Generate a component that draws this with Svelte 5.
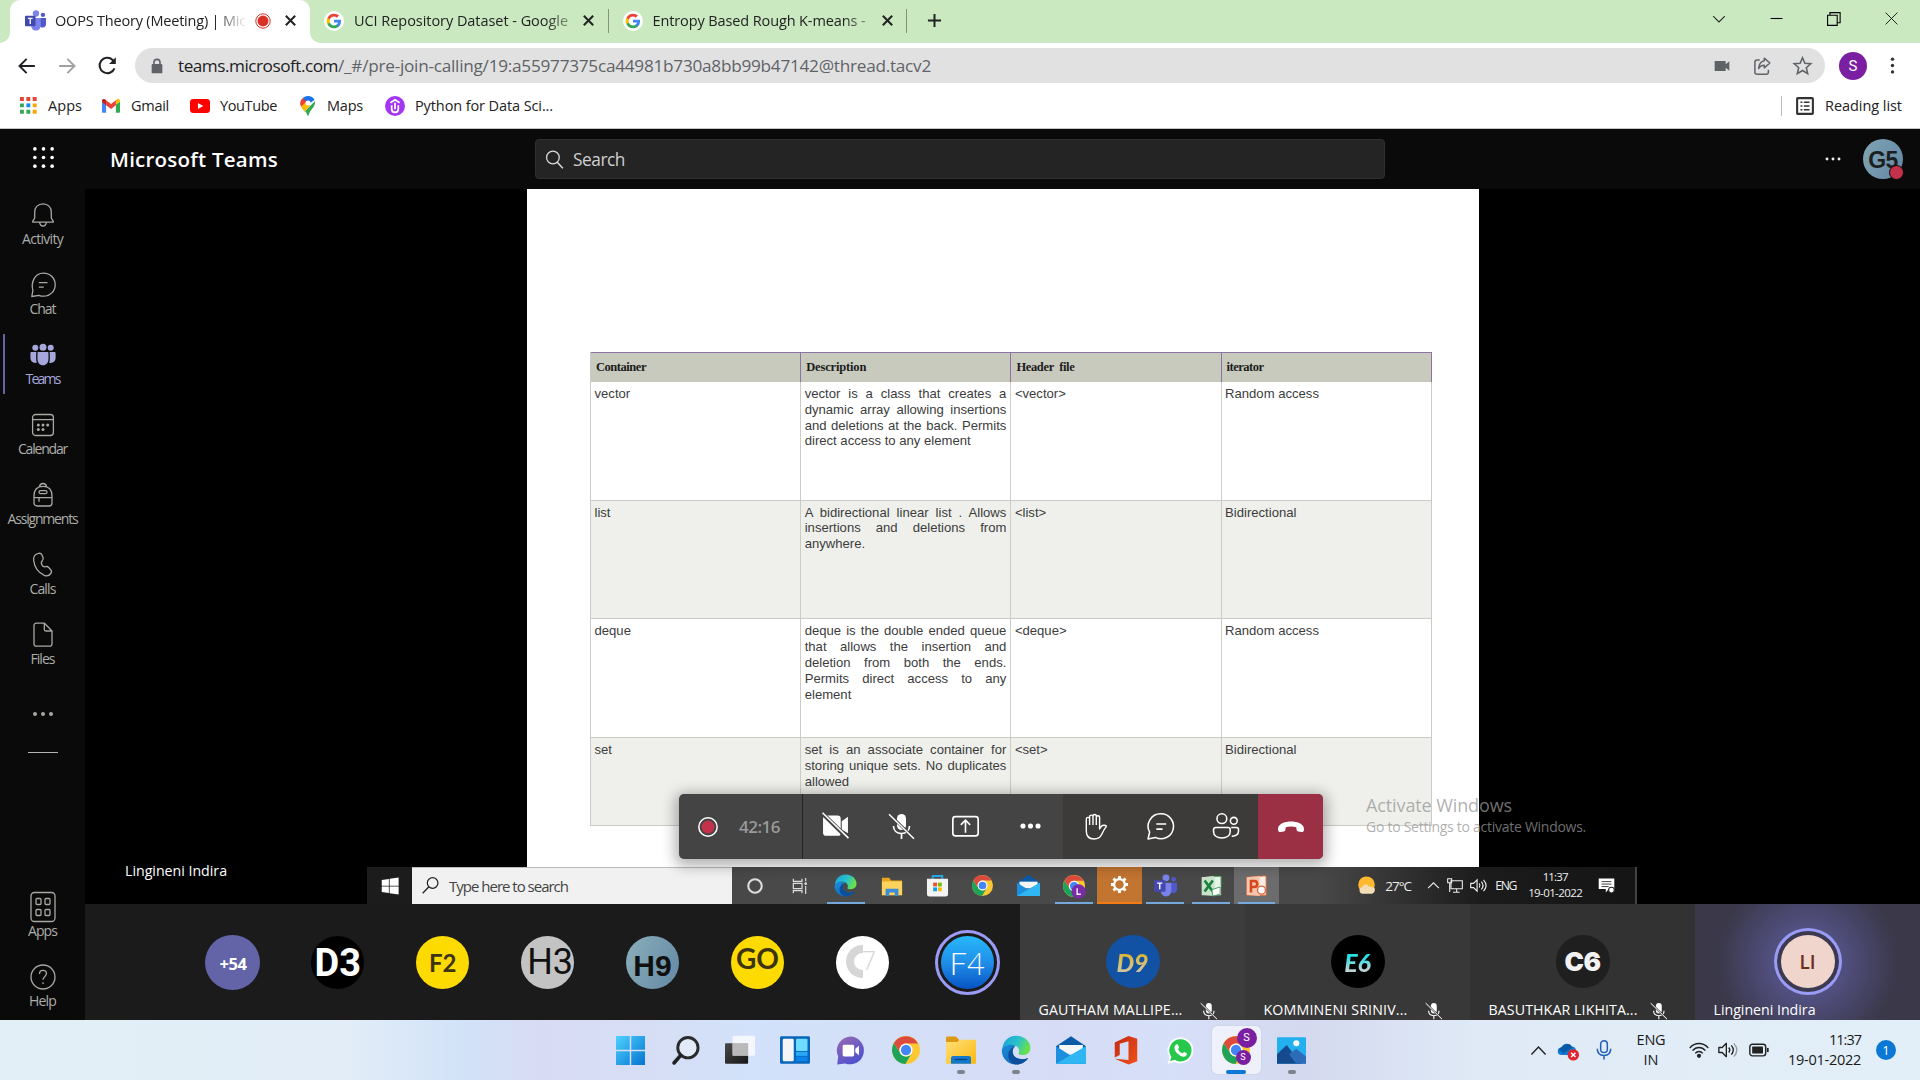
<script>
  // Spreads letter spacing so that a label takes exactly the given width.
  function fit(node, width) {
    const apply = (w) => {
      if (!w) return;
      node.style.letterSpacing = '0px';
      const natural = node.getBoundingClientRect().width;
      node.style.letterSpacing = (w - natural) / node.textContent.length + 'px';
    };
    apply(width);
    return { update: apply };
  }

  const chromeArt =
    '<circle cx="12" cy="12" r="12" fill="#fcc934"/><path d="M1.6 6A12 12 0 0 0 11.5 24L16.8 14.8A5.5 5.5 0 0 1 7.2 14.8z" fill="#1ea35a"/><path d="M1.6 6A12 12 0 0 1 22.4 6.4H12a5.6 5.6 0 0 0-5.1 7.8z" fill="#dc4b3e"/><circle cx="12" cy="12" r="5.6" fill="#fff"/><circle cx="12" cy="12" r="4.4" fill="#4285f4"/>';
  const edgeArt =
    '<path d="M1 12C1 5 6 .5 12 .5c7 0 11.500 4.600 11.500 9.800 0 3.600-2.800 5.700-6 5.700-2.800 0-3.900-.9-3.300-2 1.300-2.500-1.200-6-5.500-6C4.500 8 1.800 9.500 1 12z" fill="url(#edgeTop)"/><path d="M.6 12.500C.8 18.800 5.700 23.500 12 23.500c4.300 0 7.700-2.100 9.700-5.200-4.800 2.300-12.400.9-12.400-5.300 0-2.400 1.500-3.900 2.500-4.500C7 6.800 1 8.500.6 12.500z" fill="url(#edgeLow)"/><path d="M9.300 13c0 6.200 7.600 7.600 12.400 5.300-2 3.100-5.400 5.200-9.700 5.200-3.500-.6-6.200-3.500-6.200-7.200 0-3.300 1.900-6 6-7.800-1 .6-2.500 2.100-2.500 4.500z" fill="#0c4f9c"/>';
  const mailArt =
    '<path d="M0 9 12 1l12 8v4H0z" fill="#0a5aa8"/><path d="M2.500 8h19v7h-19z" fill="#f4f6f8"/><path d="M24 9v14H0z" fill="#30b6f3"/><path d="M0 9v14h24L12 16.500z" fill="#1c90de"/><path d="M0 23l12-7L24 9v14z" fill="#30b6f3"/>';
  const folderArt =
    '<path d="M0 2.500c0-.8.500-1.300 1.300-1.300h6.500l2.500 2.300V9H0z" fill="#dd9a10"/><path d="M0 5.500h9l2-1.700h13V23H0z" fill="url(#folder)"/><path d="M4 23v-4.500c0-1 .7-1.700 1.700-1.700h12.600c1 0 1.700.7 1.700 1.700V23z" fill="#1379cc"/><path d="M7 19.600h10" stroke="#0a3f7d" stroke-width="1"/>';
  const teamsArt =
    '<circle cx="12.500" cy="4" r="3.600" fill="#7b83eb"/><circle cx="20.500" cy="5.500" r="2.500" fill="#5059c9"/><path d="M17 9h7v7c0 2.500-1.500 4-3.700 4-1.500 0-2.700-.6-3.300-1.800z" fill="#5059c9"/><path d="M7 9h11v8c0 4-2.200 6.500-5.500 6.500S7 21 7 17z" fill="#7b83eb"/><rect y="6.500" width="12" height="12" rx="1" fill="#4349b0"/><path d="M3.300 9.500h5.400M6 9.500v6.500" stroke="#fff" stroke-width="1.500"/>';

  const art = {
    teamsLogo: teamsArt,
    google:
      '<circle cx="12" cy="12" r="12" fill="#fff"/><g transform="translate(2.400 2.400) scale(.8)"><path fill="#4285f4" d="M22.560 12.250c0-.78-.07-1.530-.2-2.250H12v4.260h5.920c-.26 1.370-1.040 2.530-2.210 3.310v2.770h3.570c2.080-1.920 3.280-4.740 3.280-8.090z"/><path fill="#34a853" d="M12 23c2.970 0 5.460-.98 7.280-2.660l-3.570-2.770c-.98.66-2.230 1.060-3.710 1.060-2.860 0-5.290-1.930-6.160-4.530H2.180v2.840C3.990 20.530 7.700 23 12 23z"/><path fill="#fbbc05" d="M5.840 14.090c-.22-.66-.35-1.360-.35-2.090s.13-1.430.35-2.090V7.070H2.180C1.430 8.550 1 10.220 1 12s.43 3.450 1.180 4.930z"/><path fill="#ea4335" d="M12 5.380c1.620 0 3.060.56 4.210 1.640l3.150-3.150C17.450 2.090 14.970 1 12 1 7.700 1 3.990 3.470 2.180 7.070l3.660 2.840c.87-2.600 3.300-4.530 6.160-4.530z"/></g>',
    rec: '<circle cx="12" cy="12" r="10.800" fill="#fff" stroke="#d93025" stroke-width="1.500"/><circle cx="12" cy="12" r="8.200" fill="#d93025"/>',
    x: '<path d="M4.500 4.500l15 15M19.500 4.500l-15 15" stroke="#222" stroke-width="3.200"/>',
    plus: '<path d="M12 1.500v21M1.500 12h21" stroke="#222" stroke-width="3.200"/>',
    chevDown: '<path d="M2 7l10 10L22 7" fill="none" stroke="#222" stroke-width="1.800"/>',
    minus: '<path d="M1 12h22" stroke="#000" stroke-width="2"/>',
    restore: '<path d="M1 5.500h16.500V23H1zM5 5V1h17.500v17.500H18" fill="none" stroke="#000" stroke-width="1.900"/>',
    close: '<path d="M1 1l22 22M23 1L1 23" stroke="#111" stroke-width="1.700"/>',
    back: '<path d="M22.500 12H2.500M11.500 2.500L2 12l9.500 9.500" fill="none" stroke="#202124" stroke-width="2.600"/>',
    forward: '<path d="M1.500 12h20M12.500 2.500L22 12l-9.500 9.500" fill="none" stroke="#a0a1a3" stroke-width="2.600"/>',
    reload: '<path d="M20.800 15.500A9.700 9.700 0 1 1 18.500 5l2.500 2.500" fill="none" stroke="#202124" stroke-width="2.600"/><path d="M22.500 1.500v8.500H14z" fill="#202124"/>',
    lock: '<rect x="4" y="9" width="16" height="14" rx="1.800" fill="#5f6368"/><path d="M7.500 10V6.500a4.500 4.500 0 0 1 9 0V10" fill="none" stroke="#5f6368" stroke-width="2.400"/>',
    cam: '<path d="M1 4.500h16.500v5l5.500-4.500v14l-5.500-4.500v5H1z" fill="#5f6368"/>',
    share: '<path d="M9 4H5.500A3 3 0 0 0 2.500 7v13a3 3 0 0 0 3 3h12a3 3 0 0 0 3-3v-3" fill="none" stroke="#5f6368" stroke-width="2"/><path d="M15 1.500l7.500 6.500-7.500 6.500V11c-4 0-6 1.500-7.500 4.500.3-5 2.500-9.500 7.500-10.500z" fill="none" stroke="#5f6368" stroke-width="1.900" stroke-linejoin="round"/>',
    star: '<path d="M12 2.200l3 7 7.500.6-5.700 5 1.700 7.400L12 18.300l-6.500 3.900 1.700-7.400-5.700-5L9 9.200z" fill="none" stroke="#5f6368" stroke-width="2"/>',
    vdots: '<g fill="#333"><circle cx="12" cy="3" r="2.400"/><circle cx="12" cy="12" r="2.400"/><circle cx="12" cy="21" r="2.400"/></g>',
    appsGrid:
      '<path fill="#ea4335" d="M0 0h5.500v5.500H0zM9 0h5.500v5.500H9zM18 0h5.500v5.500H18z"/><path fill="#34a853" d="M0 9h5.500v5.500H0zM0 18h5.500v5.500H0zM9 18h5.500v5.500H9z"/><path fill="#1a8cf0" d="M9 9h5.500v5.500H9z"/><path fill="#fba500" d="M18 9h5.500v5.500H18zM18 18h5.500v5.500H18z"/>',
    gmail:
      '<path d="M0 6v13.500c0 1 .7 1.500 1.500 1.500h4V10z" fill="#4285f4"/><path d="M24 6v13.500c0 1-.7 1.500-1.500 1.500h-4V10z" fill="#34a853"/><path d="M18.500 10L24 6V5c0-2.500-2.500-3-4-1.900l-1.500 1.200z" fill="#fbbc04"/><path d="M5.500 4.300V11l6.500 5 6.500-5V4.300L12 9.200z" fill="#ea4335"/><path d="M0 5v1.500L5.500 11V4.300L4 3.100C2.500 2 0 2.500 0 5z" fill="#c5221f"/>',
    youtube: '<rect y="3.500" width="24" height="17" rx="4" fill="#f00"/><path d="M9.500 8.300v7.400l6.500-3.700z" fill="#fff"/>',
    maps:
      '<path d="M12 0c3.500 0 6.500 1.800 7.900 4.700L8.500 12 5.800 2.300A9 9 0 0 1 12 0z" fill="#1a73e8"/><path d="M3.600 12.600C5 15 6.700 16.700 8 18.500L20.500 5.900C21 9.500 19 13 16.500 15.800 14 18.600 13.300 21 12.700 23c-.3 1-1.200 1-1.500 0-.7-2.300-2-4-3.200-5.500z" fill="#34a853"/><path d="M3.600 12.600C5 15 6.700 16.700 8 18.500l6.500-7L9.500 6z" fill="#fbbc04"/><path d="M5.800 2.300L10 7 3.700 12.600C1.800 9.500 2.300 5 5.800 2.300z" fill="#ea4335"/><circle cx="12" cy="8.500" r="3" fill="#fff"/>',
    udemy: '<circle cx="12" cy="12" r="12" fill="#a435f0"/><path d="M6.500 8L12 4.500 17.500 8M8 11v4.500c0 2.500 1.500 4 4 4s4-1.500 4-4V11M12 8v8" fill="none" stroke="#fff" stroke-width="2.100"/>',
    reading: '<rect x="1.500" y="1.500" width="21" height="21" rx="1" fill="none" stroke="#333" stroke-width="2.800"/><path d="M6 7h2.500M6 12h2.500M6 17h2.500M10.500 7H18M10.500 12H18M10.500 17H18" stroke="#333" stroke-width="2.200"/>',
    waffle: '<g fill="#fff"><circle cx="3" cy="3" r="1.900"/><circle cx="12" cy="3" r="1.900"/><circle cx="21" cy="3" r="1.900"/><circle cx="3" cy="12" r="1.900"/><circle cx="12" cy="12" r="1.900"/><circle cx="21" cy="12" r="1.900"/><circle cx="3" cy="21" r="1.900"/><circle cx="12" cy="21" r="1.900"/><circle cx="21" cy="21" r="1.900"/></g>',
    search: '<circle cx="10" cy="9.500" r="8" fill="none" stroke="#ddd" stroke-width="1.600"/><path d="M15.500 15.500l7 7.500" stroke="#ddd" stroke-width="1.800"/>',
    hdots: '<g fill="#eee"><circle cx="3" cy="12" r="2.200"/><circle cx="12" cy="12" r="2.200"/><circle cx="21" cy="12" r="2.200"/></g>',

    // call bar
    recording: '<circle cx="12" cy="12" r="11" fill="none" stroke="#fff" stroke-width="1.800"/><circle cx="12" cy="12" r="7.800" fill="#c4314b"/>',
    camOff: '<path d="M4 2.500h11a3 3 0 0 1 3 3V20c0 1-1 2-2 2H4a3 3 0 0 1-3-3V5.500a3 3 0 0 1 3-3z" fill="#fff"/><path d="M19 8l6-4.500v16L19 16z" fill="#fff"/><path d="M0 0l25 24.500" stroke="#444" stroke-width="4"/><path d="M.5-.3L25.500 24.200" stroke="#fff" stroke-width="1.500"/>',
    micOff: '<rect x="9" y="0" width="9" height="16" rx="4.500" fill="#fff"/><path d="M5.500 12c0 4.600 3.300 7.500 8 7.500s8-2.900 8-7.500M13.500 19.500V25" fill="none" stroke="#fff" stroke-width="1.700"/><path d="M1.500.5l25 24.500" stroke="#444" stroke-width="3"/><path d="M1 .2l25 24.500" stroke="#fff" stroke-width="1.500"/>',
    present: '<rect x=".8" y="3.500" width="24.400" height="18.500" rx="2.500" fill="none" stroke="#fff" stroke-width="1.600"/><path d="M13 19V7.500M8.500 11.500L13 7l4.500 4.500" fill="none" stroke="#fff" stroke-width="1.600"/>',
    more: '<g fill="#fff"><circle cx="4.500" cy="12.500" r="2.900"/><circle cx="13" cy="12.500" r="2.900"/><circle cx="21.500" cy="12.500" r="2.900"/></g>',
    hand: '<path d="M3.300 13V5c0-2.200 3.300-2.200 3.300 0v6M6.600 11V2.800c0-2.200 3.400-2.200 3.400 0V11M10 11V2c0-2.100 3.300-2.100 3.300 0v9M13.300 11V3.300c0-2.100 3.300-2.100 3.300 0V15c1.200-2.800 3.200-4.500 6-3.500.8.300.9.900.3 1.600-2 2.300-3 5-4.400 7.700-1.400 2.900-3.300 4.200-7.300 4.200-5.300 0-7.900-3.300-7.900-8V12" fill="none" stroke="#fff" stroke-width="1.400" stroke-linejoin="round"/>',
    chatBar: '<path d="M13.300.8a12 12 0 1 1-5.200 22.700L1 25l1.500-6.500A12 12 0 0 1 13.300.8z" fill="none" stroke="#fff" stroke-width="1.500" stroke-linejoin="round"/><path d="M9 10.500h9.500M9 15.500h6" stroke="#fff" stroke-width="1.500"/>',
    people: '<g fill="none" stroke="#fff" stroke-width="1.500"><circle cx="9.500" cy="5.500" r="4.700"/><circle cx="21" cy="7.500" r="3.300"/><path d="M3.500 14h12c1.200 0 2 .8 2 2v2c0 3.500-3.200 6-8 6s-8-2.500-8-6v-2c0-1.200.8-2 2-2zM18.500 14h5c1.200 0 2 .8 2 2v1.500c0 3-2.500 5-6.500 4.800"/></g>',
    hangup: '<path d="M13 7.500c6 0 11.500 2 12.800 6 .8 2.600-.2 5-2.300 4.600l-3.200-.7c-1.100-.2-1.700-1-1.800-2.200l-.2-2c-3.300-1-7.300-1-10.600 0l-.2 2c-.1 1.200-.7 2-1.800 2.200l-3.200.7C.4 18.500-.6 16.100.2 13.500 1.500 9.500 7 7.500 13 7.500z" fill="#fff"/>',

    // rail
    bell: '<path d="M13 1.800c-5 0-8.300 3.500-8.300 8.400v5.800l-2 3.400c-.2.400 0 .8.500.8h19.600c.5 0 .7-.4.500-.8l-2-3.400v-5.800c0-4.900-3.300-8.400-8.300-8.400zM9.600 20.300c.4 2.200 1.700 3.700 3.400 3.700s3-1.500 3.400-3.700"/>',
    chat: '<path d="M13.500 1.200c6.700 0 11.700 5 11.700 11.500S20.200 24.200 13.500 24.200c-1.700 0-3-.2-4.500-.9L1.800 24.500l1.100-6.200C1 12 3.500 1.200 13.500 1.200z"/><path d="M8.800 10.700H17.500M8.800 15.200h5"/>',
    teams: '<g fill="#a6a7dc" stroke="none"><circle cx="5.300" cy="5.700" r="3"/><circle cx="13" cy="5.200" r="3.500"/><circle cx="20.700" cy="5.700" r="3"/><path d="M7.500 11.200c0-.8.500-1.200 1.200-1.200h8.600c.7 0 1.200.4 1.200 1.200V17c0 3.700-2.200 6.300-5.500 6.300s-5.500-2.600-5.500-6.300zM.4 11.200c0-.8.500-1.200 1.200-1.200h5c-.4.700-.4 1.500-.4 2v5c0 1.400.2 2.600.7 3.800C3 21.500.4 19.500.4 16zM25.600 11.200c0-.8-.5-1.200-1.200-1.200h-5c.4.700.4 1.500.4 2v5c0 1.400-.2 2.600-.7 3.800 3.900.7 6.500-1.300 6.500-4.800z"/></g>',
    calendar: '<rect x="2.600" y="2.500" width="20.800" height="21" rx="3"/><path d="M2.600 7.600h20.800"/><g fill="#a8a8a4" stroke="none"><circle cx="8.300" cy="13" r="1.500"/><circle cx="13" cy="13" r="1.500"/><circle cx="17.700" cy="13" r="1.500"/><circle cx="8.300" cy="17.500" r="1.500"/><circle cx="13" cy="17.500" r="1.500"/></g>',
    backpack: '<path d="M4 14c0-6.200 3-9.700 9-9.700s9 3.500 9 9.700v7a3 3 0 0 1-3 3H7a3 3 0 0 1-3-3zM9.500 4.700c.3-2 1.500-3.200 3.500-3.200s3.200 1.200 3.500 3.200M4 15.700h18M9 15.700v4"/><rect x="9" y="8.700" width="8" height="3" rx="1.500"/>',
    phone: '<path d="M8 1.500c1.700-.5 3.300 0 4 1.500l1 2.500c.5 1.200.2 2.300-.7 3.200-1.300 1.200-1.300 2.500-.4 4.200.9 1.600 1.900 2.200 3.500 1.800 1.400-.4 2.400-.2 3.300.8l2 2.300c1 1.200 1.100 2.500.1 3.700-1.500 2.100-3.800 2.900-6.500 1.800C8.500 20.700 4.500 15.200 3.700 8.500 3.200 5 4.700 2.500 8 1.500z"/>',
    file: '<path d="M7 1.200h7.500L22 9v12.800a2.200 2.200 0 0 1-2.200 2.400H6.200A2.200 2.200 0 0 1 4 21.800V3.500a2.200 2.200 0 0 1 2.200-2.300zM14.300 1.500v6A1.500 1.500 0 0 0 15.800 9H22"/>',
    apps: '<rect x="1" y="-1.500" width="24" height="29" rx="3.500"/><rect x="6" y="4.500" width="5" height="6" rx="1"/><rect x="15" y="4.500" width="5" height="6" rx="1"/><rect x="6" y="15.500" width="5" height="6" rx="1"/><rect x="15" y="15.500" width="5" height="6" rx="1"/>',
    help: '<circle cx="13" cy="13" r="12"/><path d="M9.500 10c0-2.300 1.500-3.700 3.500-3.700s3.500 1.300 3.500 3.300c0 2.700-3.500 3-3.500 6.100M13 18.200v1.800"/>',

    // taskbars
    win10: '<g fill="#fff"><path d="M1 4l9.500-1.400v8.900H1zM11.500 2.400L23.500.7v10.800h-12zM1 12.500h9.500v8.900L1 20zM11.500 12.500h12v10.800l-12-1.700z"/></g>',
    search10: '<circle cx="15" cy="8.500" r="7.500" fill="none" stroke="#222" stroke-width="1.700"/><path d="M9.700 13.800L1 23" stroke="#222" stroke-width="1.800"/>',
    cortana: '<circle cx="12" cy="12" r="9" fill="none" stroke="#ddd" stroke-width="2.800"/>',
    tasks10: '<path d="M2 1v4h13V1M2 23v-4h13v4M2 8h13v8H2zM20.500 0v5M20.500 12v12" fill="none" stroke="#ddd" stroke-width="1.800"/><circle cx="20.500" cy="8.500" r="2" fill="#ddd"/>',
    edge: edgeArt,
    chrome: chromeArt,
    mail: mailArt,
    folder: folderArt,
    folder10: '<path d="M1 3h8l2 3h12v16H1z" fill="#e9a820"/><path d="M1 7h22v15H1z" fill="#fcd35c"/><path d="M5 23v-8h14v8h-4v-4H9v4z" fill="#3a8ddb"/>',
    store: '<path d="M7 5V2h10v3" fill="none" stroke="#28a8ea" stroke-width="2"/><path d="M1 5h22v16a2.500 2.500 0 0 1-2.500 2.500h-17A2.500 2.500 0 0 1 1 21z" fill="#f3f3f3"/><path d="M7.500 9h4v4h-4z" fill="#f25022"/><path d="M12.500 9h4v4h-4z" fill="#7fba00"/><path d="M7.500 14h4v4h-4z" fill="#00a4ef"/><path d="M12.500 14h4v4h-4z" fill="#ffb900"/>',
    chromeL: chromeArt + '<circle cx="17" cy="18" r="7.800" fill="#7b2aa8"/><path d="M15.400 14.500v6.500h4" fill="none" stroke="#fff" stroke-width="1.400"/>',
    gear: '<circle cx="12" cy="12" r="6.800" fill="none" stroke="#fff" stroke-width="2.800"/><path d="M12 1.200v4M12 18.800v4M1.200 12h4M18.800 12h4M4.400 4.400l2.800 2.800M16.800 16.800l2.800 2.800M4.400 19.600l2.800-2.800M16.800 7.200l2.800-2.800" stroke="#fff" stroke-width="3.600"/>',
    excel: '<path d="M2 2.500L20 1h3v21H2z" fill="#e8f3e8"/><path d="M2 2.500L16 1v22L2 21.500z" fill="#c9e4c9"/><path d="M5 6l9 12M14 6L5 18" stroke="#1c8040" stroke-width="3"/><path d="M13 16l9-3v8l-8 2z" fill="#fff" stroke="#3b9b57"/><path d="M15 1.500h8V12" fill="none" stroke="#3b9b57"/>',
    ppt: '<path d="M2 2.500L20 1h3v21H2z" fill="#fdeee6" stroke="#e0683c"/><path d="M2 2.500L16 1v22L2 21.500z" fill="#f6c7ae"/><path d="M6.500 19V6.500H10c4.500 0 4.500 6.500 0 6.500H7" fill="none" stroke="#d3491f" stroke-width="2.800"/><circle cx="18" cy="16.500" r="4.300" fill="#fff" stroke="#e0683c" stroke-width="1.500"/>',
    weather: '<circle cx="12" cy="11" r="10.500" fill="#ffb92e"/><path d="M7 22.500a4.300 4.300 0 0 1-.3-8.500c.8-4 6.700-4.300 8-.8 3-.3 5.500.8 7.500 2.300 1.300 3.700-1 7-4.200 7z" fill="#f3ddb5"/>',
    up10: '<path d="M2 17L12 7l10 10" fill="none" stroke="#eee" stroke-width="2"/>',
    net10: '<path d="M6 4h17v12H6zM14.500 16v5M9 21.500h10M1 1h6v6H1zM4 7v14" fill="none" stroke="#eee" stroke-width="1.600"/>',
    vol10: '<path d="M1 9h4l5-5v16l-5-5H1z" fill="none" stroke="#eee" stroke-width="1.600"/><path d="M13 9c1.500 2 1.500 4 0 6M16 6.500c3 3.500 3 7.500 0 11M19 4c4.500 5 4.500 11 0 16" fill="none" stroke="#eee" stroke-width="1.600"/>',
    notif10: '<path d="M1 2h22v15h-8l-4 5v-5H1z" fill="#fff"/><path d="M5 6.500h14M5 10h14M5 13.500h10" stroke="#333" stroke-width="1.300"/><circle cx="19" cy="18.500" r="4" fill="#fff" stroke="#222" stroke-width="1.500"/>',
    win11: '<path d="M0 0h11.400v11.400H0zM12.600 0H24v11.400H12.600zM0 12.600h11.400V24H0zM12.600 12.600H24V24H12.600z" fill="url(#win)"/>',
    search11: '<circle cx="14" cy="9.700" r="8.400" fill="#fff" fill-opacity=".35" stroke="#2b2b2b" stroke-width="2.400"/><path d="M8 16L2.500 22.300" stroke="#222" stroke-width="3" stroke-linecap="round"/>',
    tasks11: '<rect y="6.500" width="18.500" height="16.500" rx=".8" fill="url(#dark)"/><rect x="6" y=".5" width="18" height="16" rx=".8" fill="#fff" fill-opacity=".75"/><rect x="6" y="6.500" width="12.500" height="10" fill="#b5b5b5" fill-opacity=".8"/>',
    widgets: '<rect y="1" width="24" height="22" rx="1" fill="#0a66bd"/><rect x="2.200" y="3" width="8.800" height="18" rx="1" fill="#f5f5f5"/><rect x="12.800" y="3" width="9.200" height="9.700" rx=".7" fill="#6fdcff"/><path d="M12.800 13.500H22v3.200h-9.200z" fill="#2aa9f5"/><path d="M12.800 17.300H22V21h-9.200z" fill="#0a84e8"/>',
    meet: '<path d="M12.500.5a11.500 11.500 0 1 1-5 22.200L1 23.500l.8-6.500A11.500 11.500 0 0 1 12.500.5z" fill="url(#meet)"/><rect x="5.500" y="7.200" width="9.500" height="9.800" rx="1.200" fill="#fff"/><path d="M16 10.500l3-2.500v8l-3-2.500z" fill="#fff"/>',
    office: '<path d="M3 6L14 .7 21 3v18l-7 2.500L3 19l11 1V5L7 7v9l-4 2z" fill="url(#office)"/>',
    whatsapp: '<path d="M12.200.3a11.600 11.600 0 1 1-5.700 21.900L.5 23.700l1.600-5.900A11.600 11.600 0 0 1 12.200.3z" fill="#fff"/><path d="M12.200 2a9.900 9.900 0 1 1-5.500 18.300l-3.900 1.200 1.100-3.900A9.900 9.900 0 0 1 12.200 2z" fill="#25c84a"/><path d="M8.500 6.500c.8-.3 1.200 0 1.500.8l.7 1.800c.1.700-1 1.500-.9 1.800.8 1.700 2 2.800 3.800 3.600.4.100 1.200-1.300 1.700-1.200l2.200 1.100c.5.400-.1 2.100-1 2.700-2.200 1.200-5.200-.3-7.500-2.600C6.500 12 5.500 8 8.500 6.500z" fill="#fff"/>',
    photos: '<rect y="1" width="24" height="22" rx=".8" fill="#23b0ef"/><path d="M0 15l8-7.500L20 23H0z" fill="#154a8e"/><path d="M10 15l6-4.500L24 17v6H16z" fill="#2c6cb8"/><circle cx="16" cy="6" r="2.500" fill="#fff"/>',
    up11: '<path d="M2 17.500L12 7l10 10.500" fill="none" stroke="#222" stroke-width="2"/>',
    onedrive: '<path d="M4 17a4.200 4.200 0 0 1 0-8.500C5.500 3.500 13 2.500 15.500 7.500c3.500 0 5 2 5 4.700 0 2.500-1 4.800-4 4.800z" fill="#0f7ad3"/><path d="M9.500 5c3-1 6 .5 7 4L6 15 1.500 11c.3-1.500 1.200-2.500 2.500-2.600C5 6.500 7 5.300 9.500 5z" fill="#0a5aa8"/><circle cx="17.500" cy="17" r="6.500" fill="#e0242f"/><path d="M15 14.500l5 5M20 14.500l-5 5" stroke="#fff" stroke-width="1.600"/>',
    mic: '<rect x="8" y="1" width="8" height="14" rx="4" fill="none" stroke="#1f5fb8" stroke-width="1.800"/><path d="M4 10.500c0 5 3 8 8 8s8-3 8-8M12 18.500V23.500" fill="none" stroke="#1f5fb8" stroke-width="1.800"/>',
    wifi: '<g fill="none" stroke="#222" stroke-width="1.700"><path d="M1 9.500C7 2.500 17 2.500 23 9.500M4.300 12.800c4.200-5 11.200-5 15.400 0M7.500 16c2.500-3 6.500-3 9 0"/></g><circle cx="12" cy="19" r="2.500" fill="#222"/>',
    vol: '<path d="M1 9h4l5-5v16l-5-5H1z" fill="none" stroke="#222" stroke-width="1.600" stroke-linejoin="round"/><path d="M13 9c1.500 2 1.500 4 0 6M16 6.500c3 3.500 3 7.500 0 11" fill="none" stroke="#222" stroke-width="1.600"/><path d="M19 4c4.500 5 4.500 11 0 16" fill="none" stroke="#999" stroke-width="1.600"/>',
    battery: '<rect x="1" y="5" width="19" height="14" rx="3" fill="none" stroke="#222" stroke-width="1.700"/><rect x="3.800" y="7.800" width="13" height="8.400" rx="1" fill="#222"/><path d="M22.500 9.500v5" stroke="#222" stroke-width="2.200"/>'
  };

  const tabs = [
    { icon: 'teamsLogo', text: 'OOPS Theory (Meeting) | Mic', w: 191, active: true },
    { icon: 'google', text: 'UCI Repository Dataset - Google', w: 214 },
    { icon: 'google', text: 'Entropy Based Rough K-means -', w: 213 }
  ];
  const marks = [
    { icon: 'appsGrid', size: 17, lead: 28, text: 'Apps', w: 34, box: 82 },
    { icon: 'gmail', size: 18, lead: 29, text: 'Gmail', w: 38, box: 88 },
    { icon: 'youtube', size: 20, lead: 30, text: 'YouTube', w: 57, box: 108 },
    { icon: 'maps', size: 20, lead: 29, text: 'Maps', w: 36, box: 87 },
    { icon: 'udemy', size: 20, lead: 30, text: 'Python for Data Sci...', w: 138, box: 180 }
  ];
  const rail = [
    ['bell', 'Activity', 41],
    ['chat', 'Chat', 26],
    ['teams', 'Teams', 34],
    ['calendar', 'Calendar', 49],
    ['backpack', 'Assignments', 70],
    ['phone', 'Calls', 26],
    ['file', 'Files', 24]
  ];
  const rows = [
    ['vector', 'vector is a class that creates a dynamic array allowing insertions and deletions at the back. Permits direct access to any element', '<vector>', 'Random access'],
    ['list', 'A bidirectional linear list . Allows insertions and deletions from anywhere.', '<list>', 'Bidirectional'],
    ['deque', 'deque is the double ended queue that allows the insertion and deletion from both the ends. Permits direct access to any element', '<deque>', 'Random access'],
    ['set', 'set is an associate container for storing unique sets. No duplicates allowed', '<set>', 'Bidirectional']
  ];
  const heads = [['Container', 50], ['Description', 60], ['Header  file', 58], ['iterator', 37]];
  const sharedApps = [
    ['cortana', 18, ''], ['tasks10', 16, ''], ['edge', 23, 'run'], ['folder10', 22, ''], ['store', 23, ''],
    ['chrome', 21, ''], ['mail', 23, ''], ['chromeL', 22, 'run'], ['gear', 19, 'alert'], ['teamsLogo', 23, 'run'],
    ['excel', 22, 'run'], ['ppt', 22, 'run open']
  ];
  const bubbles = [
    ['+54', 'more'], ['D3', 'd3'], ['F2', 'f2'], ['H3', 'h3'], ['H9', 'h9'], ['GO', 'go'], ['7', 'c7'], ['F4', 'f4']
  ];
  const tiles = [
    { id: 'D9', cls: 'd9', name: 'GAUTHAM MALLIPE...', w: 144 },
    { id: 'E6', cls: 'e6', name: 'KOMMINENI SRINIV...', w: 144 },
    { id: 'C6', cls: 'c6', name: 'BASUTHKAR LIKHITA...', w: 149 },
    { id: 'LI', cls: 'li', name: 'Lingineni Indira', w: 102 }
  ];
  const dock = [
    ['win11', 29], ['search11', 29], ['tasks11', 30], ['widgets', 30], ['meet', 29], ['chrome', 28], ['folder', 30],
    ['edge', 30], ['mail', 30], ['office', 30], ['whatsapp', 27], ['chrome', 28], ['photos', 29]
  ];
</script>

{#snippet ic(name, size = 24, box = 24)}
  <svg class="ic" width={size} height={size} viewBox="0 0 {box} {box}">{@html art[name]}</svg>
{/snippet}

{#snippet label(text, w, cls = '')}
  <span class="label {cls}" use:fit={w}>{text}</span>
{/snippet}

<svg class="defs" width="0" height="0">
  <defs>
    <linearGradient id="edgeTop" x1="0" y1="0" x2="1" y2=".4"><stop offset="0" stop-color="#1a9fe0" /><stop offset=".6" stop-color="#2cc3c8" /><stop offset="1" stop-color="#67e04b" /></linearGradient>
    <linearGradient id="edgeLow" x1="0" y1="0" x2="1" y2="1"><stop offset="0" stop-color="#1b8fdc" /><stop offset="1" stop-color="#0e5ba8" /></linearGradient>
    <linearGradient id="folder" x1="0" y1="0" x2="1" y2="1"><stop offset="0" stop-color="#ffe07a" /><stop offset="1" stop-color="#fbb80f" /></linearGradient>
    <linearGradient id="win" x1="0" y1="0" x2="1" y2="1"><stop offset="0" stop-color="#4fd2ff" /><stop offset="1" stop-color="#0473d0" /></linearGradient>
    <linearGradient id="dark" x1="0" y1="0" x2="1" y2="1"><stop offset="0" stop-color="#4a4a4a" /><stop offset="1" stop-color="#161616" /></linearGradient>
    <linearGradient id="meet" x1="0" y1="0" x2=".6" y2="1"><stop offset="0" stop-color="#9a6ab0" /><stop offset="1" stop-color="#4f52cf" /></linearGradient>
    <linearGradient id="office" x1="0" y1="0" x2="1" y2="1"><stop offset="0" stop-color="#c22a10" /><stop offset="1" stop-color="#f0501c" /></linearGradient>
  </defs>
</svg>

<div class="screen">
  <div class="tabstrip">
    {#each tabs as tab}
      <div class="tab" class:active={tab.active}>
        <span class="favicon">{@render ic(tab.icon, tab.active ? 21 : 20)}</span>
        <span class="tabtext">{@render label(tab.text, tab.w)}</span>
        {#if tab.active}{@render ic('rec', 16)}{/if}
        <span class="tabx">{@render ic('x', 15)}</span>
      </div>
    {/each}
    <div class="newtab">{@render ic('plus', 15)}</div>
    <div class="winctl">
      <span>{@render ic('chevDown', 14)}</span>
      <span>{@render ic('minus', 13)}</span>
      <span>{@render ic('restore', 14)}</span>
      <span>{@render ic('close', 13)}</span>
    </div>
  </div>

  <div class="toolbar">
    <span class="nav">{@render ic('back', 18)}</span>
    <span class="nav">{@render ic('forward', 18)}</span>
    <span class="nav">{@render ic('reload', 19)}</span>
    <div class="omnibox">
      {@render ic('lock', 16)}
      <span class="url">
        {@render label('teams.microsoft.com', 160, 'host')}{@render label('/_#/pre-join-calling/19:a55977375ca44981b730a8bb99b47142@thread.tacv2', 593)}
      </span>
      <span class="omniicon">{@render ic('cam', 16)}</span>
      <span class="omniicon">{@render ic('share', 18)}</span>
      <span class="omniicon">{@render ic('star', 19)}</span>
    </div>
    <span class="profile">S</span>
    <span class="nav">{@render ic('vdots', 17)}</span>
  </div>

  <div class="bookmarks">
    {#each marks as m}
      <div class="mark" style:width="{m.box}px">
        <span class="markicon" style:width="{m.lead}px">{@render ic(m.icon, m.size)}</span>
        {@render label(m.text, m.w)}
      </div>
    {/each}
    <div class="reading">
      {@render ic('reading', 18)}
      {@render label('Reading list', 77)}
    </div>
  </div>

  <header class="appbar">
    <span class="waffle">{@render ic('waffle', 23)}</span>
    <span class="brand">{@render label('Microsoft Teams', 168)}</span>
    <div class="searchbox">
      {@render ic('search', 19)}
      {@render label('Search', 52)}
    </div>
    <span class="appdots">{@render ic('hdots', 16)}</span>
    <span class="me">G5<i></i></span>
  </header>

  <div class="body">
    <nav class="rail">
      {#each rail as [icon, text, w]}
        <div class="railitem" class:on={icon === 'teams'}>
          {@render ic(icon, 26, 26)}
          {@render label(text, w)}
        </div>
      {/each}
      <div class="raildots"><i></i><i></i><i></i></div>
      <div class="railline"></div>
      <div class="railitem low appsitem">{@render ic('apps', 26, 26)}{@render label('Apps', 29)}</div>
      <div class="railitem low">{@render ic('help', 26, 26)}{@render label('Help', 27)}</div>
    </nav>

    <main class="meeting">
      <div class="stage">
        <div class="slide">
          <div class="grid">
            {#each heads as [h, w]}
              <div class="th">{@render label(h, w)}</div>
            {/each}
            {#each rows as row, i}
              {#each row as cell, c}
                <div class="td" class:alt={i % 2} class:just={c === 1}>{cell}</div>
              {/each}
            {/each}
          </div>
        </div>

        <div class="shared">
          <span class="start">{@render ic('win10', 18)}</span>
          <div class="find">{@render ic('search10', 17)}{@render label('Type here to search', 119)}</div>
          {#each sharedApps as [icon, size, cls]}
            <span class="app {cls}">{@render ic(icon, size)}</span>
          {/each}
          <div class="sharedtray">
            {@render ic('weather', 19)}
            <span class="temp">{@render label('27°C', 26)}</span>
            {@render ic('up10', 13)}
            {@render ic('net10', 16)}
            {@render ic('vol10', 17)}
            <span class="lang">{@render label('ENG', 21)}</span>
            <span class="when">{@render label('11:37', 25)}{@render label('19-01-2022', 54)}</span>
            {@render ic('notif10', 17)}
          </div>
        </div>

        <div class="speaker">{@render label('Lingineni Indira', 102)}</div>
        <div class="activate">
          {@render label('Activate Windows', 146, 'big')}
          {@render label('Go to Settings to activate Windows.', 220)}
        </div>
        <div class="callbar">
          <div class="timer">{@render ic('recording', 20)}{@render label('42:16', 41)}</div>
          <span class="btn">{@render ic('camOff', 27, 26)}</span>
          <span class="btn">{@render ic('micOff', 26, 26)}</span>
          <span class="btn">{@render ic('present', 27, 26)}</span>
          <span class="btn">{@render ic('more', 23, 26)}</span>
          <span class="btn dim">{@render ic('hand', 26, 26)}</span>
          <span class="btn dim">{@render ic('chatBar', 27, 26)}</span>
          <span class="btn dim">{@render ic('people', 27, 26)}</span>
          <span class="btn end">{@render ic('hangup', 26, 26)}</span>
        </div>
      </div>

      <div class="strip">
        <div class="bubbles">
          {#each bubbles as [text, cls]}
            <div class="slot"><span class="bubble {cls}"><b>{text}</b></span></div>
          {/each}
        </div>
        {#each tiles as t}
          <div class="tile {t.cls}">
            <span class="face"><b>{t.id}</b></span>
            <div class="name">
              {@render label(t.name, t.w)}
              {#if t.cls !== 'li'}<span class="muted">{@render ic('micOff', 17, 26)}</span>{/if}
            </div>
          </div>
        {/each}
      </div>
    </main>
  </div>

  <footer class="taskbar">
    <div class="dock">
      {#each dock as [icon, size], i}
        <div class="dockitem" class:current={i === 11} class:running={i === 6 || i === 7 || i === 12}>
          {@render ic(icon, size)}
          {#if i === 11}<em class="s1">S</em><em class="s2">S</em>{/if}
        </div>
      {/each}
    </div>
    <div class="tray">
      <span class="cell caret">{@render ic('up11', 17)}</span>
      <span class="cell cloud">{@render ic('onedrive', 21)}</span>
      <span class="cell voice">{@render ic('mic', 20)}</span>
      <span class="cell locale">{@render label('ENG', 29)}{@render label('IN', 15)}</span>
      <span class="cell wifi">{@render ic('wifi', 20)}</span>
      <span class="cell sound">{@render ic('vol', 20)}</span>
      <span class="cell power">{@render ic('battery', 20)}</span>
      <span class="cell clock">{@render label('11:37', 32)}{@render label('19-01-2022', 73)}</span>
      <span class="count">1</span>
    </div>
  </footer>
</div>

<style>
  :global(body) { margin: 0; background: #000; }
  .screen { width: 1920px; height: 1080px; overflow: hidden; display: flex; flex-direction: column; font-family: 'Open Sans', 'Noto Sans', sans-serif; font-size: 14.5px; line-height: 20px; color: #222; background: #fff; }
  .defs { position: absolute; }
  .ic { display: block; flex: none; overflow: visible; }
  .label { display: inline-block; white-space: pre; flex: none; }

  .tabstrip { height: 43px; flex: none; background: #cbe9c0; display: flex; padding-left: 10px; }
  .tab { width: 298.5px; height: 43px; box-sizing: border-box; padding-left: 14px; display: flex; align-items: center; position: relative; padding-bottom: 2px; }
  .tab:not(.active)::after { content: ''; width: 1px; height: 24px; background: #83927d; position: absolute; right: 0; top: 9px; }
  .tab.active { width: 300px; background: #fff; border-radius: 10px 10px 0 0; padding-left: 15px; }
  .tab.active::before, .tab.active::after { content: ''; position: absolute; bottom: 0; width: 10px; height: 10px; }
  .tab.active::before { left: -10px; background: radial-gradient(circle at 0 0, #cbe9c0 9.5px, #fff 10px); }
  .tab.active::after { right: -10px; background: radial-gradient(circle at 100% 0, #cbe9c0 9.5px, #fff 10px); }
  .favicon { width: 30px; flex: none; }
  .tabtext { width: 214px; flex: none; overflow: hidden; mask-image: linear-gradient(to right, #000 190px, rgba(0, 0, 0, .45)); }
  .active .tabtext { width: 192px; margin-right: 8px; mask-image: linear-gradient(to right, #000 160px, transparent); }
  .tabx { margin-left: 13px; }
  .active .tabx { margin-left: 12px; }
  .newtab { padding: 13px 0 0 20px; flex: 1; }
  .winctl { display: flex; }
  .winctl span { width: 57.500px; display: grid; place-items: center; padding-bottom: 6px; }

  .toolbar { height: 45px; flex: none; display: flex; align-items: center; padding-left: 7px; }
  .nav { width: 40px; flex: none; display: grid; place-items: center; }
  .omnibox { width: 1690px; height: 35px; margin-left: 8px; box-sizing: border-box; background: #e1e1e1; border-radius: 18px; display: flex; align-items: center; padding: 0 3px 0 14px; }
  .url { flex: 1; padding-left: 13px; display: flex; font-size: 17.2px; color: #5f6368; }
  .url :global(.host) { color: #202124; }
  .omniicon { width: 40px; display: grid; place-items: center; }
  .profile { width: 28px; height: 28px; margin: 0 5px 0 14px; border-radius: 50%; background: #7b1fa2; color: #fff; display: grid; place-items: center; font: 15px Roboto, sans-serif; }

  .bookmarks { height: 41px; flex: none; box-sizing: border-box; border-bottom: 1px solid #c6c6c6; display: flex; align-items: center; padding: 0 18px 5px 20px; }
  .mark { display: flex; align-items: center; }
  .markicon { flex: none; }
  .reading { margin-left: auto; height: 20px; border-left: 1px solid #bbb; padding-left: 14px; display: flex; align-items: center; gap: 11px; }

  .appbar { height: 60px; flex: none; background: #0a0a0a; display: flex; align-items: center; color: #fff; }
  .waffle { width: 78px; padding: 0 0 4px 32px; }
  .brand { width: 425px; font-size: 20.5px; font-weight: 600; line-height: 28px; padding-bottom: 1px; }
  .searchbox { width: 850px; height: 40px; box-sizing: border-box; background: #242424; border: 1px solid #303030; border-radius: 4px; display: flex; align-items: center; gap: 9px; padding: 1px 0 0 9px; font-size: 17.3px; color: #d0d0d0; }
  .appdots { margin-left: 440px; }
  .me { width: 40px; height: 40px; margin-left: 22px; border-radius: 50%; background: linear-gradient(115deg, #7fa4b4, #6487a3); color: #1c1f22; font: bold 23px/42px 'Liberation Sans', sans-serif; text-align: center; position: relative; letter-spacing: -.5px; }
  .me i { position: absolute; width: 13px; height: 13px; right: -1px; bottom: -1px; border: 1px solid #0a0a0a; border-radius: 50%; background: #c4314b; }

  .body { height: 831px; flex: none; display: flex; }
  .rail { width: 85px; flex: none; background: #0a0a0a; display: flex; flex-direction: column; color: #adada9; }
  .railitem { height: 70px; box-sizing: border-box; padding-top: 13px; display: flex; flex-direction: column; align-items: center; font-size: 14px; line-height: 18px; position: relative; flex: none; }
  .railitem .ic { fill: none; stroke: #a8a8a4; stroke-width: 1.3; stroke-linejoin: round; margin-bottom: 2px; }
  .railitem.on { color: #a6a7dc; }
  .railitem.on::before { content: ''; position: absolute; left: 3px; top: 5px; width: 2px; height: 60px; background: #6264a7; }
  .raildots { display: flex; justify-content: center; gap: 4px; padding-top: 33px; height: 73px; box-sizing: border-box; }
  .raildots i { width: 4px; height: 4px; border-radius: 50%; background: #a8a8a4; }
  .railline { width: 30px; height: 1px; margin: 0 28px; background: #b5b5b2; }
  .railitem.low { padding-top: 11px; }
  .appsitem { margin-top: auto; }
  .railitem.low:last-child { height: 67px; }

  .meeting { width: 1835px; }
  .stage { height: 715px; background: #000; position: relative; }
  .slide { width: 952px; height: 678px; margin-left: 442px; background: #fff; box-sizing: border-box; padding: 163px 0 0 63px; overflow: hidden; }
  .grid { width: 842px; box-sizing: border-box; display: grid; grid-template-columns: repeat(4, 210.200px); grid-template-rows: 30px repeat(3, 118.700px) 88px; border-left: 1px solid #ccccc6; }
  .th { background: #c8cabe; border-top: 1.5px solid #8d73a3; border-right: 1px solid #8d73a3; box-sizing: border-box; padding: 3.500px 0 0 5px; font: bold 12.5px/20px 'Liberation Serif', serif; color: #1c1c1c; }
  .td { border-right: 1px solid #ccccc6; border-bottom: 1px solid #ccccc6; box-sizing: border-box; padding: 4px 4px 0 3.5px; font: 13.1px/15.800px 'Liberation Sans', Arial, sans-serif; color: #3c3c3c; }
  .td.alt { background: #eff0eb; }
  .td.just { text-align: justify; }

  .shared { width: 1270px; height: 37px; margin-left: 282px; box-sizing: border-box; display: flex; background: linear-gradient(to right, #3c3c3c, #4a4a4a 35%, #484848 75%, #1b1b1b 88%, #151515); border-right: 2px solid #444; }
  .start { width: 45px; background: #1c1c1c; display: grid; place-items: center; }
  .find { width: 320px; box-sizing: border-box; background: #f1f1f1; border-top: 1px solid #bbb; display: flex; align-items: center; gap: 10px; padding: 0 0 1px 10px; color: #444; font-size: 15px; }
  .app { width: 45.6px; display: grid; place-items: center; position: relative; }
  .app.run::after { content: ''; position: absolute; left: 4px; right: 4px; bottom: 0; height: 2px; background: #76a9db; }
  .app.alert { background: #c27431; border-bottom: 2px solid #f57c14; box-sizing: border-box; }
  .app.open { background: #6c6c6c; }
  .sharedtray { flex: 1; display: flex; align-items: center; color: #eee; font-size: 13.500px; padding-left: 78px; }
  .temp { margin: 0 16px 0 9px; }
  .sharedtray > .ic + .ic { margin-left: 7px; }
  .lang { font-size: 12.200px; margin: 0 12px 0 8px; }
  .when { font-size: 11.500px; line-height: 16px; display: flex; flex-direction: column; align-items: center; margin-right: 16px; padding-bottom: 2px; }

  .speaker { position: absolute; left: 40px; top: 672px; color: #fff; font-size: 14.2px; }
  .activate { position: absolute; left: 1281px; top: 604px; display: flex; flex-direction: column; align-items: flex-start; color: rgba(150, 150, 150, .75); font-size: 14px; line-height: 18px; }
  .activate :global(.big) { font-size: 18px; line-height: 25px; }
  .callbar { position: absolute; left: 594px; top: 605px; width: 644px; height: 65px; display: flex; border-radius: 5px; overflow: hidden; box-shadow: 0 3px 14px 4px rgba(0, 0, 0, .3); background: #444; }
  .timer { width: 124px; box-sizing: border-box; border-right: 1px solid #222; padding-left: 19px; display: flex; align-items: center; gap: 21px; font-size: 17px; font-weight: 600; color: #999; flex: none; }
  .btn { width: 65px; display: grid; place-items: center; }
  .btn.dim { background: #3c3b3a; }
  .btn.end { background: #9b2f44; }

  .strip { height: 116px; background: #1b1b1b; display: flex; overflow: hidden; }
  .bubbles { width: 935px; box-sizing: border-box; padding-left: 95.500px; display: flex; }
  .slot { width: 104.900px; display: grid; place-items: center; padding-top: 1px; }
  .bubble { width: 53px; height: 53px; box-sizing: border-box; border-radius: 50%; display: grid; place-items: center; overflow: hidden; line-height: 30px; }
  .bubble b { font-weight: inherit; }
  .more { background: #6264a7; color: #fff; font-size: 16.5px; font-weight: 700; width: 55px; height: 55px; letter-spacing: -.4px; padding-top: 2px; }
  .d3 { background: #000; color: #fff; font: bold 38px/36px Roboto, sans-serif; }
  .f2 { background: #fedb00; color: #3c3413; font: bold 24px/30px Lato, sans-serif; }
  .h3 { background: #c3c3c3; color: #111; font: 36px/36px Roboto, sans-serif; padding: 0 0 2px 5px; }
  .h9 { background: linear-gradient(115deg, #8aafbb, #6488a3); color: #101010; font: bold 30px/34px 'Liberation Sans', sans-serif; padding-top: 7px; }
  .go { background: #fedb00; color: #3b340d; font: bold 28px/30px Lato, sans-serif; padding-bottom: 9px; }
  .c7 { background: #fff; color: #d8d8d8; font: 300 25px/26px Roboto, sans-serif; position: relative; padding: 0 0 2px 14px; }
  .c7::before { content: ''; position: absolute; left: 10px; top: 9px; width: 17px; height: 33px; border: 8px solid #d6d6d6; border-right: 0; border-radius: 17px 0 0 17px; box-sizing: border-box; }
  .f4 { background: linear-gradient(#28b8fa, #1f8de8 52%, #0753c3); color: #fff; font: 300 31px/34px Lato, sans-serif; width: 59px; height: 59px; border: 3px solid #1b1b1b; outline: 3px solid #9a9bf5; }
  .tile { width: 225px; flex: none; height: 116px; display: flex; flex-direction: column; align-items: center; padding-top: 31px; box-sizing: border-box; background: #3c3c3c; }
  .tile.e6 { background: #383838; }
  .tile.c6 { background: #323232; }
  .tile.li { background: radial-gradient(circle at 50% 50%, #56548a 25px, #3a3849 90px); }
  .face { width: 54px; height: 54px; border-radius: 50%; display: grid; place-items: center; font: italic 900 25px/30px Lato, sans-serif; }
  .d9 .face { background: #1152a4; }
  .d9 b, .e6 b { padding: 0 3px; color: transparent; background: linear-gradient(#dfb52c 20%, #cfc69c 80%); background-clip: text; }
  .e6 .face { background: #000; }
  .e6 b { background: linear-gradient(#24e3e6 35%, #b9d3d4 75%); background-clip: text; }
  .c6 .face { background: #1f1f1f; color: #f2f2f2; font: 900 26px/30px Inter, sans-serif; letter-spacing: -.5px; }
  .li .face { background: #f0d5cd; color: #6e2c1b; font: 600 19px/30px 'Open Sans', sans-serif; border: 4px solid #3b3a50; outline: 3px solid #9a9bf5; margin-top: -4px; }
  .li .face b { font-weight: 600; }
  .li .face + .name { margin-top: 8px; }
  .name { align-self: stretch; margin-top: 12px; padding-left: 18.500px; color: #fff; font-size: 14.2px; display: flex; align-items: center; }
  .muted { margin-left: 17px; padding-top: 2px; }
  .c6 .muted { margin-left: 12px; }

  .taskbar { height: 60px; flex: none; display: flex; background: linear-gradient(to right, #e2eff6, #e2edf7 18%, #d2e2f8 24%, #d7dcf4 28%, #d6def5 34%, #d2e2fa 39%, #d6dcf5 55%, #d6e0f8 61%, #d4d9ef 68%, #dfeaf6 77%, #e3eff8); }
  .dock { display: flex; padding-left: 602.500px; }
  .dockitem { width: 55.100px; display: grid; place-items: center; position: relative; }
  .running::after, .current::after { content: ''; position: absolute; left: 24px; bottom: 6px; width: 8px; height: 4px; border-radius: 2px; background: #7d828c; }
  .current::before { content: ''; position: absolute; inset: 6px 3px; border-radius: 5px; background: rgba(255, 255, 255, .6); box-shadow: 0 0 1px #99a; }
  .current .ic { position: relative; }
  .current::after { width: 20px; left: 17.500px; background: #0a78d4; }
  .dockitem em { position: absolute; border-radius: 50%; background: #7b1fa2; color: #fff; text-align: center; font: 10px Roboto, sans-serif; }
  .dockitem .s1 { width: 20px; height: 20px; left: 28px; top: 8px; font-size: 11px; line-height: 20px; }
  .dockitem .s2 { width: 15px; height: 15px; left: 27px; top: 30px; font-size: 9px; line-height: 15px; }
  .tray { flex: 1; display: flex; align-items: center; justify-content: flex-end; padding-right: 24px; }
  .cell { display: flex; flex-direction: column; align-items: center; flex: none; color: #1a1a1a; }
  .caret { width: 19px; }
  .cloud { width: 41px; }
  .voice { width: 29px; }
  .locale { width: 66px; }
  .wifi { width: 29px; }
  .sound { width: 29px; }
  .power { width: 34px; }
  .clock { width: 85px; align-items: flex-end; }
  .count { width: 20px; height: 20px; margin-left: 15px; border-radius: 50%; background: #0a78d4; color: #fff; font-size: 13px; text-align: center; }
</style>
